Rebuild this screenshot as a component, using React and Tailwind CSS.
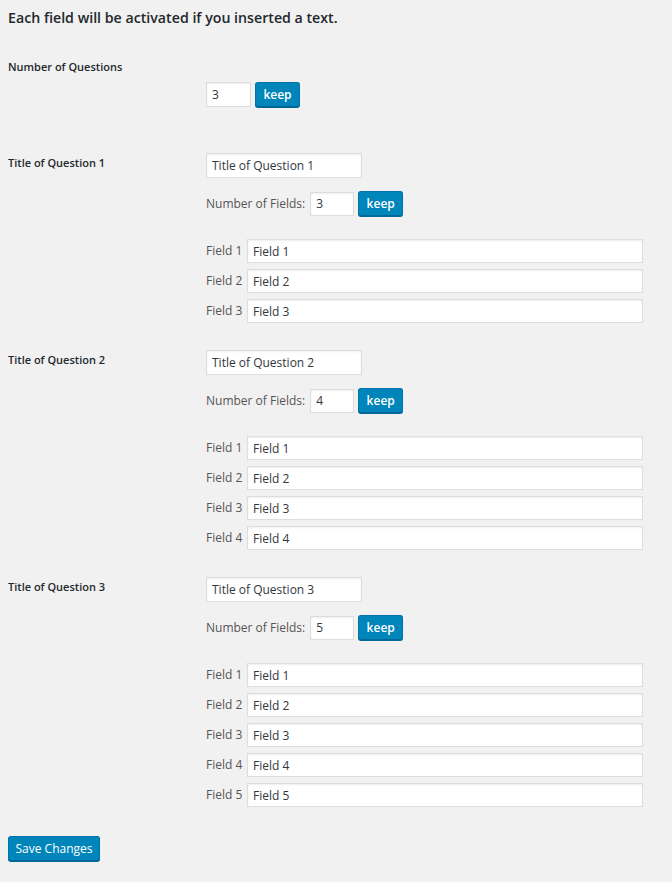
import React, { useState } from 'react';

const initialQuestions = [
  { title: 'Title of Question 1', count: 3 },
  { title: 'Title of Question 2', count: 4 },
  { title: 'Title of Question 3', count: 5 },
];

const inputClass =
  'border border-[#ddd] bg-white px-[5px] text-[12px] text-[#32373c] shadow-[inset_0_1px_2px_rgba(0,0,0,0.07)] outline-none';

function KeepButton() {
  return (
    <button
      type="button"
      className="h-[25px] w-[45px] rounded-[3px] border border-[#0073aa] border-b-[#006799] bg-[#0085ba] text-[12px] font-semibold text-white shadow-[0_1px_0_#006799]"
    >
      keep
    </button>
  );
}

function QuestionBlock({ question }) {
  const [count, setCount] = useState(String(question.count));
  const fields = Array.from({ length: question.count }, (_, i) => i + 1);

  return (
    <div className="flex">
      <div className="w-[198px] shrink-0 pt-[3px] text-[11px] leading-4 font-semibold text-[#23282d]">
        {question.title}
      </div>
      <div className="flex-1">
        <input
          className={`${inputClass} h-[25px] w-[156px]`}
          defaultValue={question.title}
        />
        <div className="mt-[13px] flex items-center gap-[4px] text-[12px] text-[#555]">
          <span className="pr-[1px]">Number of Fields:</span>
          <input
            className={`${inputClass} h-[24px] w-[44px]`}
            value={count}
            onChange={(e) => setCount(e.target.value)}
          />
          <KeepButton />
        </div>
        <div className="mt-[23px] flex flex-col gap-[6px]">
          {fields.map((n) => (
            <div key={n} className="flex items-center gap-[4px]">
              <span className="w-[37px] shrink-0 text-[12px] text-[#555]">Field {n}</span>
              <input className={`${inputClass} h-[24px] w-[396px]`} defaultValue={`Field ${n}`} />
            </div>
          ))}
        </div>
      </div>
    </div>
  );
}

export default function App() {
  const [numQuestions, setNumQuestions] = useState('3');

  return (
    <div className="min-h-screen bg-[#f1f1f1] px-2 pt-[8px] font-['Open_Sans',sans-serif] text-[#23282d]">
      <h2 className="text-[14.2px] leading-5 font-semibold">
        Each field will be activated if you inserted a text.
      </h2>

      {/* number of questions */}
      <div className="mt-[31px] text-[11px] leading-4 font-semibold">Number of Questions</div>
      <div className="mt-[7px] flex items-center gap-[4px] pl-[198px]">
        <input
          className={`${inputClass} h-[25px] w-[45px]`}
          value={numQuestions}
          onChange={(e) => setNumQuestions(e.target.value)}
        />
        <KeepButton />
      </div>

      <div className="mt-[45px] flex flex-col gap-[26px]">
        {initialQuestions.map((q) => (
          <QuestionBlock key={q.title} question={q} />
        ))}
      </div>

      <button
        type="button"
        className="mt-[29px] h-[25px] w-[92px] rounded-[3px] border border-[#0073aa] border-b-[#006799] bg-[#0085ba] text-[12px] text-white shadow-[0_1px_0_#006799]"
      >
        Save Changes
      </button>
    </div>
  );
}
